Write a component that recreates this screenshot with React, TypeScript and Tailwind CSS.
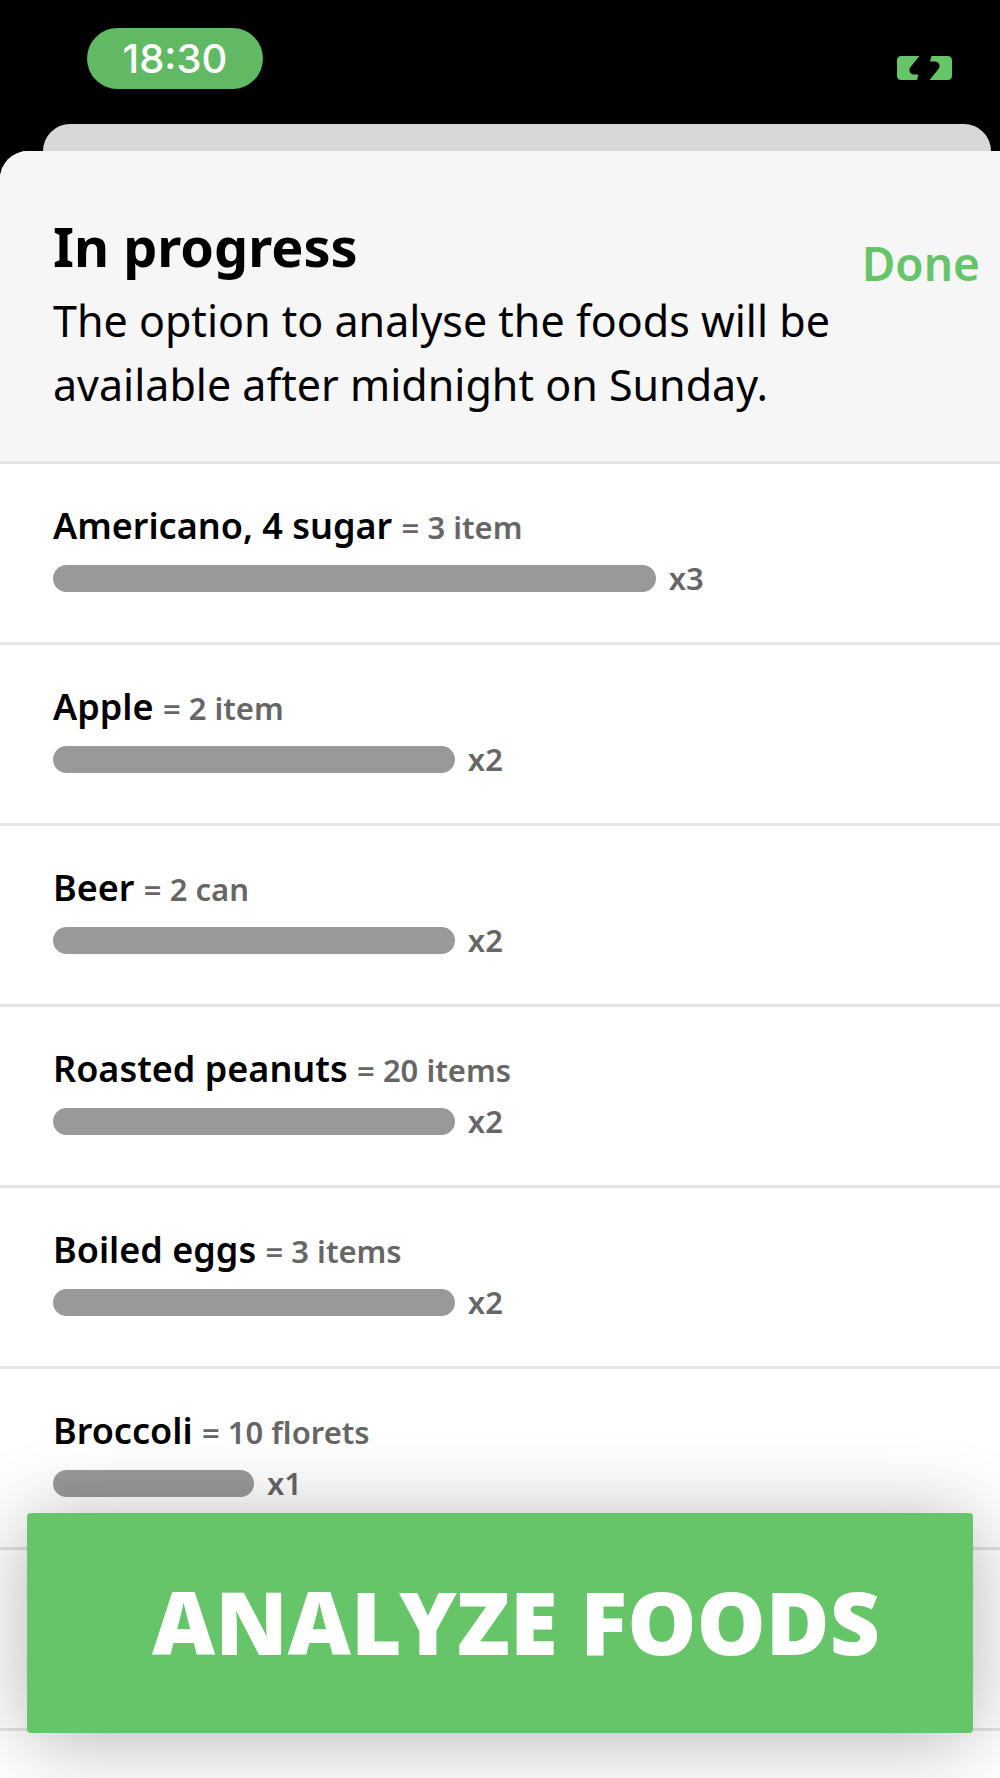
type Food = {
  name: string
  amount: string
  count: number
}

const foods: Food[] = [
  { name: 'Americano, 4 sugar', amount: '3 item', count: 3 },
  { name: 'Apple', amount: '2 item', count: 2 },
  { name: 'Beer', amount: '2 can', count: 2 },
  { name: 'Roasted peanuts', amount: '20 items', count: 2 },
  { name: 'Boiled eggs', amount: '3 items', count: 2 },
  { name: 'Broccoli', amount: '10 florets', count: 1 },
]

function ChargingIcon() {
  return (
    <svg viewBox="0 0 56 24" className="h-6 w-14" fill="#66c568" aria-hidden="true">
      <path d="M5.500 0H23.500L14.500 11C12 14 14 18.500 18 18.500H22.500L21 24H5.500Q1 24 1 19.500V4.500Q1 0 5.500 0Z" />
      <path d="M35.500 0H51.500Q56 0 56 4.500V19.500Q56 24 51.500 24H33.500L42.500 13C45 10 43 5.500 39 5.500H34Z" />
    </svg>
  )
}

function StatusBar() {
  return (
    <div className="flex h-[124px] items-start justify-between pt-7 pr-12 pl-[87px]">
      <div className="flex h-[61px] w-44 items-center justify-center rounded-full bg-[#61ba63] font-[Inter,sans-serif] text-[40px] font-medium text-white">
        18:30
      </div>
      <div className="pt-7">
        <ChargingIcon />
      </div>
    </div>
  )
}

function FoodRow({ name, amount, count }: Food) {
  return (
    <li className="h-[181px] border-b-3 border-[#e5e5e5] pt-[37px] pr-[43px] pl-[53px]">
      <p className="text-[36px] leading-[50px] font-semibold text-black">
        {name} <span className="text-[31px] text-[#666666]">= {amount}</span>
      </p>
      <div className="mt-[13px] flex h-[27px] items-center gap-[13px]">
        <div className="h-full shrink-0 rounded-full bg-[#999999]" style={{ width: `${(count * 200) / 9}%` }} />
        <span className="text-[31px] font-semibold text-[#666666]">x{count}</span>
      </div>
    </li>
  )
}

export default function App() {
  return (
    <main className="h-screen overflow-hidden bg-black font-['Noto_Sans','Open_Sans',sans-serif]">
      <StatusBar />
      <div className="mr-[9px] ml-[43px] h-[27px] rounded-t-[27px] bg-[#d8d8d8]" />
      <section className="min-h-full overflow-hidden rounded-tl-[28px] bg-white">
        <header className="flex h-[313px] items-start justify-between border-b-3 border-[#e5e5e5] bg-[#f6f6f6] pt-[60px] pr-5 pl-[53px]">
          <div className="max-w-[800px]">
            <h1 className="text-[54px] leading-[70px] font-bold text-black">In progress</h1>
            <p className="mt-2 text-[43px] leading-16 text-black">
              The option to analyse the foods will be available after midnight on Sunday.
            </p>
          </div>
          <button type="button" className="mt-5 text-[46px] leading-16 font-semibold text-[#66c568]">
            Done
          </button>
        </header>
        <ul>
          {foods.map((food) => (
            <FoodRow key={food.name} {...food} />
          ))}
          <li className="h-[181px] border-b-3 border-[#e5e5e5]" />
        </ul>
      </section>
      <button
        type="button"
        className="fixed inset-x-[27px] bottom-[45px] h-[220px] rounded-[4px] bg-[#66c568] pb-1 pl-8 text-[87px] font-black text-white shadow-[0_6px_80px_rgba(0,0,0,0.3)]"
      >
        ANALYZE FOODS
      </button>
    </main>
  )
}
